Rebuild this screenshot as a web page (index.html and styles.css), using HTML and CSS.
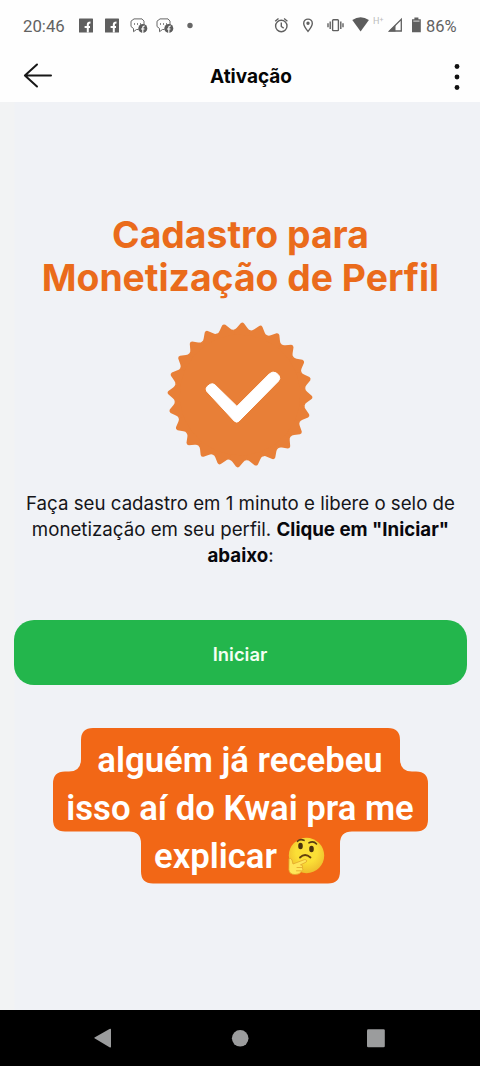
FILE: index.html
```html
<!DOCTYPE html>
<html lang="pt-BR">
<head>
<meta charset="utf-8">
<meta name="viewport" content="width=device-width, initial-scale=1">
<title>Ativação</title>
<link rel="stylesheet" href="styles.css">
</head>
<body>
<div class="screen">
  <header class="top">
    <div class="status">
      <span class="clock">20:46</span>
      <svg class="status-icons" width="456" height="24" viewBox="0 0 456 24" fill="none">
        <defs>
          <g id="fb">
            <rect width="14" height="14" rx=".6" fill="#5f5f5f"/>
            <path d="M8.800 14V8.500H11M5.600 8.500h3.200M8.800 9V6.200Q8.800 4 11.500 4" stroke="#fff" stroke-width="2"/>
          </g>
          <g id="chat">
            <path d="M4 .9h8l2 2.200v4M4 .9 1 3.200v5.300l2.500 2v3.200l3-2.200h2" stroke="#666" stroke-width="1" stroke-linejoin="round"/>
            <path d="M4 6h1M7 6h1M10 6h1" stroke="#666" stroke-width="1.300"/>
            <circle cx="12.800" cy="10.400" r="4.500" fill="#5c5c5c"/>
            <path d="M12.800 15v-5.200q0-1.800 2-1.800M11 11h3.500" stroke="#fff" stroke-width="1.200"/>
          </g>
        </defs>
        <use href="#fb" x="55" y="4.500"/>
        <use href="#fb" x="81" y="4.500"/>
        <use href="#chat" x="106" y="4"/>
        <use href="#chat" x="132" y="4"/>
        <circle cx="166" cy="11.500" r="2.700" fill="#666"/>
        <g stroke="#606060" stroke-width="1.400">
          <circle cx="257.300" cy="12" r="5.700"/>
          <path d="M257.300 8.500v4l2.400 1.600M251.200 7.200l3.300-2.700M263.400 7.200l-3.300-2.700"/>
          <path d="M284 17.400c-2.600-3.300-4.300-5.600-4.300-8a4.300 4.300 0 0 1 8.600 0c0 2.400-1.700 4.700-4.300 8z"/>
          <circle cx="284" cy="9.300" r="1" fill="#606060"/>
          <rect x="308.600" y="5.800" width="5.800" height="10.800" rx=".8"/>
          <path d="M306.200 7.500v7.600M316.800 7.500v7.600M304 9.300v4M319 9.300v4"/>
        </g>
        <path d="M328.300 6q8.300-5.300 16.600 0L336.600 17.400z" fill="#5c5c5c"/>
        <path d="M365.500 17 377.300 5.200V17z" stroke="#606060" stroke-width="1.300"/>
        <path d="M364.500 17.600l7-6.600v6.600z" fill="#606060"/>
        <path d="M388 5.300h2.400V3.500h4v1.800h2.400V18.300H388z" fill="#606060"/>
        <path d="M389.300 6.300h6.200v1.700h-6.200z" fill="#aaa"/>
      </svg>
      <span class="network">H<sup>+</sup></span>
      <span class="battery">86%</span>
    </div>
    <nav class="toolbar">
      <svg class="back" width="30" height="26" viewBox="0 0 30 26" fill="none" stroke="#171717" stroke-width="2" stroke-linecap="round" stroke-linejoin="round"><path d="M28 12.500H2M14 1.500 1.900 12.500 14 23.500"/></svg>
      <h1 class="page-title">Ativação</h1>
      <svg class="more" width="6" height="26" viewBox="0 0 6 26" fill="#111"><circle cx="3" cy="2.500" r="2.400"/><circle cx="3" cy="13" r="2.400"/><circle cx="3" cy="23.500" r="2.400"/></svg>
    </nav>
  </header>

  <main class="content">
    <h2 class="headline">Cadastro para<br>Monetização de Perfil</h2>
    <svg class="seal" width="146" height="146" viewBox="-73 -73 146 146" fill="#e87f37">
      <defs>
        <path id="t1" d="M-8.600-60V-65Q-6.600-65.200-5.400-67L-1.700-71.700Q0-73.200 1.700-71.700L5.400-67Q6.600-65.200 8.600-65V-60z"/>
        <g id="t3"><use href="#t1"/><use href="#t1" transform="rotate(15)"/><use href="#t1" transform="rotate(30)"/></g>
        <g id="t6"><use href="#t3"/><use href="#t3" transform="rotate(45)"/></g>
        <g id="t12"><use href="#t6"/><use href="#t6" transform="rotate(90)"/></g>
      </defs>
      <circle r="64.500"/>
      <g transform="rotate(1.900)"><use href="#t12"/><use href="#t12" transform="rotate(180)"/></g>
      <path transform="translate(.7 3.800)" stroke="#fff" stroke-width="1" d="M-34-7.500Q-35.500-10 -33.500-12.300L-30.600-14.500Q-28-16-25.800-14L-3.800 7.500 28.800-25.100Q32.200-28 35.800-25.800L38.300-23.200Q40.200-20.500 37.700-17.600L-1.800 22.400Q-4 24.300-6.300 22.400z" fill="#fff"/>
    </svg>
    <p class="lead">Faça seu cadastro em 1 minuto e libere o selo de<br>monetização em seu perfil. <b>Clique em "Iniciar"</b><br><b>abaixo</b>:</p>
    <button class="start">Iniciar</button>
    <div class="caption">
      <svg class="caption-shape" width="376" height="156" viewBox="0 0 376 156">
        <path fill="#f26716" d="M40 0H335Q347 0 347 12V31Q347 43.500 359 43.500H363Q375 43.500 375 55.500V91.500Q375 103.500 363 103.500H299Q287 103.500 287 115.500V143.500Q287 155.500 275 155.500H100Q88 155.500 88 143.500V115.500Q88 103.500 76 103.500H12Q0 103.500 0 91.500V55.500Q0 43.500 12 43.500H16Q28 43.500 28 31V12Q28 0 40 0z"/>
      </svg>
      <div class="caption-text">
        <span>alguém já recebeu</span>
        <span>isso aí do Kwai pra me</span>
        <span class="last">explicar
          <svg class="thinking" width="40" height="40" viewBox="0 0 40 40" fill="none" stroke-linecap="round" stroke-linejoin="round">
            <defs><radialGradient id="face" cx=".5" cy=".4" r=".6"><stop offset=".5" stop-color="#fbdf36"/><stop offset="1" stop-color="#eebc2c"/></radialGradient></defs>
            <circle cx="20.500" cy="19.500" r="17.700" fill="url(#face)"/>
            <ellipse cx="14.500" cy="10" rx="2.300" ry="3.200" fill="#49310e"/>
            <ellipse cx="25.500" cy="13" rx="2.300" ry="3.200" fill="#49310e"/>
            <path d="M11.500 5.300Q14 2.500 18 4.300M23 6.800Q27.500 4.500 30.500 8" stroke="#583b13" stroke-width="1.600"/>
            <path d="M14 21.500Q19 16.500 24.500 21.500" stroke="#64400d" stroke-width="1.800"/>
            <path d="M3.200 22.500Q5 21.500 6 24L7 28 18.500 23.600Q21.500 23.600 20.300 26L14.500 28.800Q17.500 29 16.500 31.500Q17.500 34 15.500 35.200Q14 38.700 9 38.500Q3.500 38.500 2.900 34z" fill="#ffe65a" stroke="#e2a52b" stroke-width=".8"/>
            <path d="M11 31.500h5M10.500 34.800h4.500" stroke="#e2a52b" stroke-width=".8"/>
          </svg>
        </span>
      </div>
    </div>
  </main>

  <footer class="navbar">
    <svg width="480" height="56" viewBox="0 0 480 56" fill="#9b9c9d">
      <path d="M94.500 28.300Q94 28 94.500 27.500L109.500 19Q111 18.300 111 19.500V36.800Q111 38 109.500 37.300z"/>
      <circle cx="240.200" cy="28.300" r="8.300"/>
      <rect x="367" y="19.300" width="17.800" height="18" rx="1.300"/>
    </svg>
  </footer>
</div>
</body>
</html>
```
FILE: styles.css
```css
* { box-sizing: border-box; }
body { margin: 0; background: #f1f3f6; }
.screen {
  width: 480px;
  height: 1066px;
  display: flex;
  flex-direction: column;
  overflow: hidden;
  font-family: Inter, "Liberation Sans", sans-serif;
  background: linear-gradient(90deg, #f2f3f4 14px, #f0f2f6 15px);
}
.top { height: 102px; flex: none; background: #fefefe; }
.status {
  height: 50px;
  display: grid;
  padding: 14px 0 0 24px;
  font-family: Roboto, sans-serif;
  color: #626262;
}
.status > * { grid-area: 1 / 1; }
.clock { font-size: 16.8px; line-height: 25px; margin-left: -1px; }
.network { font-size: 9px; line-height: 10px; margin: 2px 0 0 349px; color: #bbb; }
.network sup { font-size: 7px; line-height: 0; vertical-align: 2px; }
.battery { font-size: 16.5px; line-height: 25px; margin-left: 402px; }
.toolbar {
  height: 52px;
  display: grid;
  grid-template-columns: 60px 1fr 60px;
  align-items: center;
}
.back { margin-left: 23px; }
.more { margin: 2px 0 0 34px; }
.page-title {
  margin: 2px 0 0 22px;
  text-align: center;
  font-size: 19px;
  line-height: 26px;
  font-weight: 650;
  color: #050505;
}
.content {
  flex: 1;
  display: flex;
  flex-direction: column;
  align-items: center;
  padding-top: 112px;
}
.headline {
  margin: 0 0 0 1px;
  font-size: 37.3px;
  line-height: 42.5px;
  font-weight: 700;
  text-align: center;
  white-space: nowrap;
  color: #ea6b1b;
}
.seal { margin-top: 23px; flex: none; }
.lead {
  margin: 23px 0 0 1px;
  font-size: 18.7px;
  line-height: 26px;
  text-align: center;
  white-space: nowrap;
  color: #151519;
}
.lead b { font-weight: 650; color: #08080c; }
.start {
  width: 453px;
  height: 65px;
  flex: none;
  margin-top: 51px;
  padding: 2px 0 0;
  border: 0;
  border-radius: 20px;
  background: #23b64c;
  color: #f4fff2;
  font: 600 18.4px/26px Inter, sans-serif;
}
.caption { display: grid; width: 375px; margin-top: 43px; }
.caption > * { grid-area: 1 / 1; }
.caption-text {
  display: flex;
  flex-direction: column;
  align-items: center;
  padding: 8px 1px 0 0;
  font: 650 34.7px/48px Roboto, sans-serif;
  color: #fff;
  white-space: nowrap;
}
.last { display: flex; align-items: center; gap: 9px; }
.navbar { height: 56px; flex: none; background: #000; }
.navbar svg, .caption svg, .status svg { display: block; }
```
